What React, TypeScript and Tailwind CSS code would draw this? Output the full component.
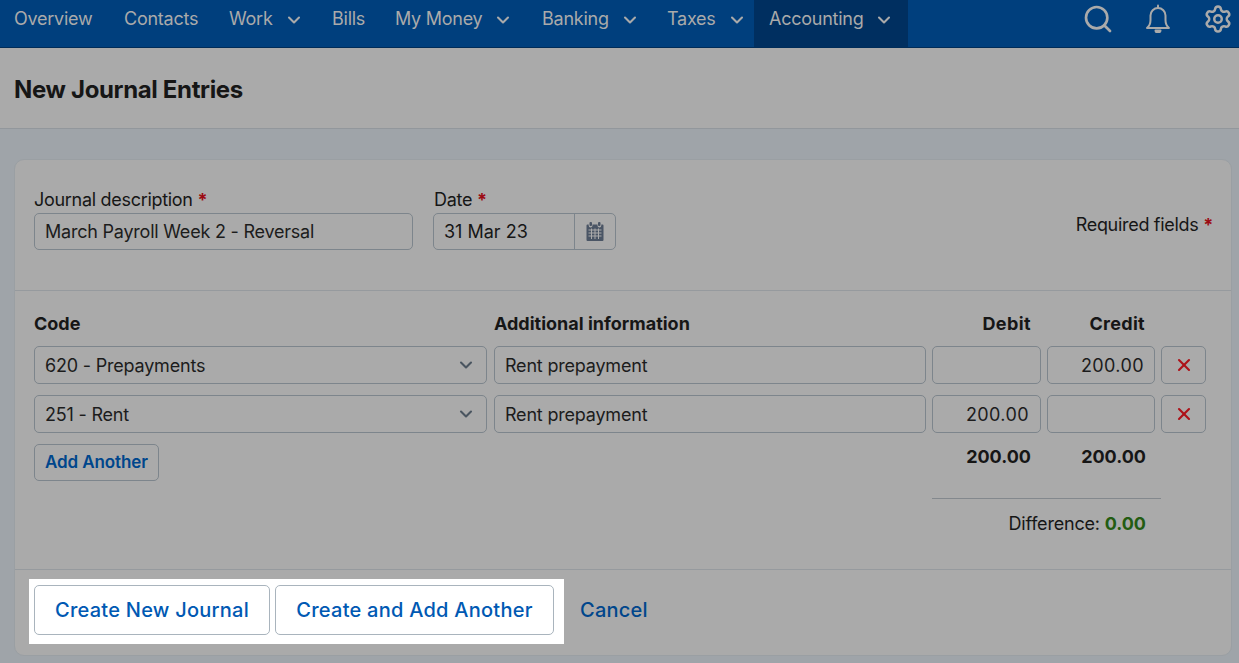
import { ChevronDown, Search, Settings, X } from 'lucide-react';

const NAV_ITEMS = [
  { label: 'Overview', width: 'w-[110px]' },
  { label: 'Contacts', width: 'w-[105px]' },
  { label: 'Work', width: 'w-[103px]', menu: true },
  { label: 'Bills', width: 'w-[63px]' },
  { label: 'My Money', width: 'w-[147px]', menu: true },
  { label: 'Banking', width: 'w-[125px]', menu: true },
  { label: 'Taxes', width: 'w-[100px]', menu: true },
  { label: 'Accounting', width: 'w-[154px]', menu: true, active: true },
];

const LINES = [
  { code: '620 - Prepayments', info: 'Rent prepayment', debit: '', credit: '200.00' },
  { code: '251 - Rent', info: 'Rent prepayment', debit: '200.00', credit: '' },
];

function Star() {
  return <span className="font-bold text-[#9c0a12]">*</span>;
}

function CalendarIcon() {
  return (
    <svg width="18" height="19" viewBox="0 0 18 19" fill="#4a5565">
      <rect x="3.5" y="0" width="2.5" height="4" rx="1" />
      <rect x="12" y="0" width="2.5" height="4" rx="1" />
      <path d="M1.5 2.5h1.2v1a1.6 1.6 0 0 0 3.8 0v-1h5v1a1.6 1.6 0 0 0 3.8 0v-1h1.2a1 1 0 0 1 1 1V18a1 1 0 0 1-1 1H1.5a1 1 0 0 1-1-1V3.500a1 1 0 0 1 1-1z" />
      <path d="M2.500 8h13M2.500 11h13M2.500 14h13M5.500 6.500v10.500M9 6.500v10.500M12.500 6.500v10.500" stroke="#aaaaaa" strokeWidth="1" />
    </svg>
  );
}

function BellIcon() {
  return (
    <svg width="26" height="29" viewBox="0 0 26 29" fill="none" stroke="#aaaaaa" strokeWidth="2" strokeLinejoin="round" strokeLinecap="round">
      <path d="M2 24c2.500-2 3.500-4 3.500-8v-4.500a7.500 7.500 0 0 1 15 0V16c0 4 1 6 3.500 8z" />
      <path d="M13 1.500v2" />
      <path d="M10.500 26.500a2.500 2 0 0 0 5 0z" fill="#aaaaaa" />
    </svg>
  );
}

function Field({ children, className }: { children?: React.ReactNode; className: string }) {
  return (
    <div className={`flex items-center rounded-[5px] border border-[#7d858c] px-[10px] text-[18px] text-[#1c1c1c] ${className}`}>
      {children}
    </div>
  );
}

export default function App() {
  return (
    <div className="flex h-[663px] w-[1239px] flex-col overflow-hidden bg-[#9fa4a9] font-['Inter',sans-serif] text-[#161616]">
      <nav className="flex h-[48px] shrink-0 items-stretch border-b border-[#002c58] bg-[#003f7d] pl-px text-[18px] text-[#aaaaaa]">
        {NAV_ITEMS.map(item => (
          <div
            key={item.label}
            className={`flex items-center pb-[10px] ${item.width} ${item.active ? 'bg-[#002f60] pl-[15px]' : 'pl-[13px]'}`}
          >
            <span className="tracking-[-0.25px] whitespace-nowrap">{item.label}</span>
            {item.menu && <ChevronDown size={20} strokeWidth={2.5} className="ml-[11px] mt-[3px]" />}
          </div>
        ))}
        <div className="ml-auto flex items-start pr-[6px] pt-[3px]">
          <Search size={32} strokeWidth={2} />
          <div className="ml-[31px] mt-[1px]">
            <BellIcon />
          </div>
          <Settings size={30} strokeWidth={2} className="ml-[32px] mt-[1px]" />
        </div>
      </nav>

      <header className="flex h-[81px] shrink-0 items-center border-b border-[#92979c] bg-[#aaaaaa] pl-[14px] pt-[4px]">
        <h1 className="text-[24px] font-bold tracking-[-0.35px]">New Journal Entries</h1>
      </header>

      <main className="ml-[14px] mr-[7px] mt-[30px] h-[497px] rounded-[10px] border border-[#9a9fa3] bg-[#aaaaaa]">
        <section className="flex h-[131px] border-b border-[#969a9e] pl-[19px] pr-[18px] pt-[27px]">
          <div className="w-[379px]">
            <div className="mb-[1px] h-[25px] text-[18px] leading-[25px] tracking-[-0.3px]">
              Journal description <Star />
            </div>
            <Field className="h-[37px] w-full tracking-[-0.22px]">March Payroll Week 2 - Reversal</Field>
          </div>
          <div className="ml-[20px] w-[183px]">
            <div className="mb-[1px] h-[25px] pl-px text-[18px] leading-[25px] tracking-[-0.3px]">
              Date <Star />
            </div>
            <div className="flex h-[37px] rounded-[5px] border border-[#7d858c]">
              <div className="flex w-[141px] items-center border-r border-[#7d858c] pl-[10px] text-[18px]">31 Mar 23</div>
              <div className="flex flex-1 items-center justify-center">
                <CalendarIcon />
              </div>
            </div>
          </div>
          <div className="ml-auto pt-[25px] text-[18px] leading-[25px] tracking-[-0.3px]">
            Required fields <Star />
          </div>
        </section>

        <section className="h-[279px] border-b border-[#969a9e] pl-[19px] pt-[19px]">
          <div className="flex h-[36px] text-[18px] font-bold">
            <div className="w-[460px]">Code</div>
            <div className="w-[438px]">Additional information</div>
            <div className="w-[109px] pr-[10px] text-right tracking-[0.4px]">Debit</div>
            <div className="ml-[6px] w-[108px] pr-[10px] text-right tracking-[0.3px]">Credit</div>
          </div>
          <div className="flex flex-col gap-[11px]">
            {LINES.map(line => (
              <div key={line.code} className="flex">
                <Field className="h-[38px] w-[453px] justify-between tracking-[-0.2px]">
                  {line.code}
                  <ChevronDown size={20} strokeWidth={2.5} className="text-[#4a5560]" />
                </Field>
                <Field className="ml-[7px] h-[38px] w-[432px] tracking-[-0.2px]">{line.info}</Field>
                <Field className="ml-[6px] h-[38px] w-[109px] justify-end pr-[11px] tracking-[0.4px]">{line.debit}</Field>
                <Field className="ml-[6px] h-[38px] w-[108px] justify-end tracking-[0.4px]">{line.credit}</Field>
                <div className="ml-[6px] flex h-[38px] w-[45px] items-center justify-center rounded-[5px] border border-[#7d858c]">
                  <X size={20} strokeWidth={2.5} className="text-[#ad1219]" />
                </div>
              </div>
            ))}
          </div>
          <div className="flex">
            <div className="w-[898px]">
              <button className="mt-[11px] h-[37px] w-[125px] rounded-[5px] border border-[#7d858c] pt-px text-[17px] font-semibold tracking-[-0.1px] text-[#00468c]">
                Add Another
              </button>
            </div>
            <div className="w-[229px]">
              <div className="flex h-[66px] border-b border-[#83888d] pt-[10px] text-[18px] font-bold">
                <div className="w-[109px] pr-[10px] text-right">200.00</div>
                <div className="ml-[6px] w-[108px] pr-[9px] text-right">200.00</div>
              </div>
              <div className="mt-[11px] w-[214px] text-right text-[18px] tracking-[-0.2px]">
                Difference: <span className="font-bold tracking-normal text-[#235c12]">0.00</span>
              </div>
            </div>
          </div>
        </section>

        <footer className="flex items-center px-[14px] pt-[9px]">
          <div className="flex gap-[5px] bg-white p-[6px_10px_9px_5px]">
            <button className="h-[50px] w-[236px] rounded-[5px] border border-[#a9b4bd] text-[20px] font-medium tracking-[0.25px] text-[#0059b3]">
              Create New Journal
            </button>
            <button className="h-[50px] w-[279px] rounded-[5px] border border-[#a9b4bd] text-[20px] font-medium tracking-[0.25px] text-[#0059b3]">
              Create and Add Another
            </button>
          </div>
          <span className="ml-[16px] pb-[3px] text-[20px] font-medium tracking-[0.25px] text-[#00468c]">Cancel</span>
        </footer>
      </main>
    </div>
  );
}
